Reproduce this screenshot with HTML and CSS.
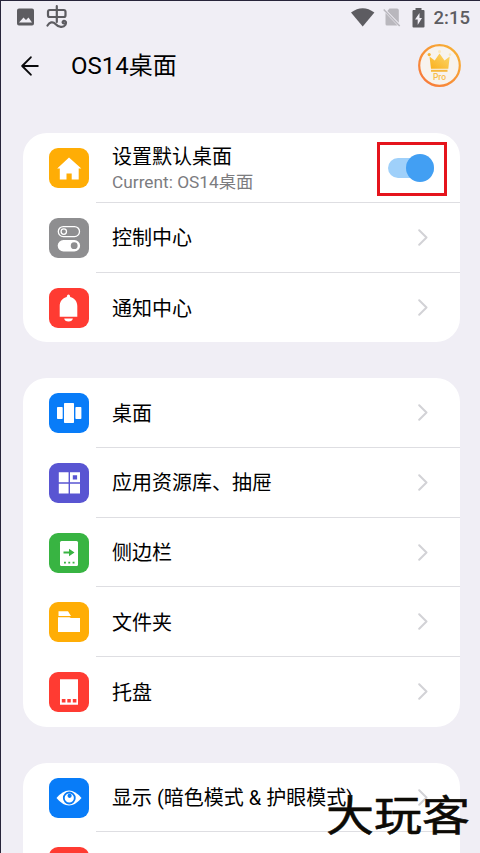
FILE: index.html
```
<!DOCTYPE html>
<html lang="zh-CN">
<head>
<meta charset="utf-8">
<title>OS14桌面</title>
<link rel="stylesheet" href="styles.css">
</head>
<body>
<div class="screen">
  <div class="statusbar">
    <svg class="st-photo" width="18" height="18" viewBox="0 0 18 18"><path fill="#5d5c61" fill-rule="evenodd" d="M2 .5h13a2 2 0 0 1 2 2v13a2 2 0 0 1-2 2H2a2 2 0 0 1-2-2v-13a2 2 0 0 1 2-2zM2 14.500h13l-3.500-5-2.500 2.500-2.500-2.500z"/></svg>
    <svg class="st-bug" width="22" height="24" viewBox="0 0 22 24" fill="none" stroke="#5d5c61" stroke-width="2.200" stroke-linecap="round" stroke-linejoin="round"><rect x="2" y="5" width="17.500" height="7" rx="1.800"/><path d="M10.800 1.200v15.800M1.500 20.500c2-3.200 5.200-4.500 8-1.500 3 3.500 8 3.800 9.800 1 1.500-2.600.2-4.500-1.500-4.200-1.700.5-1.500 2.800.3 2.500"/></svg>
    <span class="spacer"></span>
    <svg class="st-wifi" width="24" height="19" viewBox="0 0 24 19"><path fill="#5d5c61" d="M0 4.500Q11.700-4 23.400 4.500L11.700 18.500z"/></svg>
    <svg class="st-sim" width="18" height="19" viewBox="0 0 18 19"><path fill="#b9b7bd" d="M6.500.5H14a1.800 1.800 0 0 1 1.800 1.800v12.400L4.300 3zM2.500 5l12 12.500H4A1.500 1.500 0 0 1 2.500 16z"/><path d="M.7 1.600 16.700 18" stroke="#b9b7bd" stroke-width="1.500"/></svg>
    <svg class="st-bat" width="13" height="20" viewBox="0 0 13 20"><path fill="#5d5c61" fill-rule="evenodd" d="M3.500 0h6v2H11.500a1 1 0 0 1 1 1v15.500a1 1 0 0 1-1 1h-10a1 1 0 0 1-1-1V3a1 1 0 0 1 1-1h2zM7.500 5 3 11.500h2.700V17L10 10H7.500z"/></svg>
    <span class="clock">2:15</span>
  </div>

  <header class="appbar">
    <svg class="back" width="18" height="20" viewBox="0 0 18 20" fill="none" stroke="#0b0b0d" stroke-width="1.900" stroke-linecap="round" stroke-linejoin="round"><path d="M16.800 10H1.500M9.800 1.300 1.200 10l8.600 8.700"/></svg>
    <h1>OS14桌面</h1>
    <span class="spacer"></span>
    <div class="pro">
      <svg width="43" height="43" viewBox="0 0 43 43">
        <defs>
          <linearGradient id="ring" x1="0" y1="1" x2="1" y2="0"><stop offset="0" stop-color="#f8743b"/><stop offset="1" stop-color="#f7b533"/></linearGradient>
          <linearGradient id="gold" x1="0" y1="1" x2="1" y2="0"><stop offset="0" stop-color="#faaf1c"/><stop offset="1" stop-color="#fbd970"/></linearGradient>
        </defs>
        <circle cx="21.500" cy="21.500" r="20.300" fill="#f7f3ee" stroke="url(#ring)" stroke-width="2.200"/>
        <path fill="url(#gold)" d="M11.500 12.500l5.200 4 4.800-7 5 7 5.200-4-1.400 12.200H13z"/>
        <circle cx="11.200" cy="10.600" r="1.600" fill="#f9b330"/><circle cx="21.500" cy="7.500" r="1.500" fill="#fbe9bc"/><circle cx="32" cy="10.600" r="1.300" fill="#fbe9bc"/>
        <path fill="#f6b73e" d="M13 25.800h16.500v2H13z"/>
      </svg>
      <span class="pro-label">Pro</span>
    </div>
  </header>

  <main class="groups">
    <section class="card">
      <div class="row">
        <span class="tile amber"><svg width="40" height="40" viewBox="0 0 40 40"><path fill="#fff" d="M20 9.500 32.300 20.500H29.700V31.500H22.700V25.500H17.500V31.500H10.800V20.500H8.200z"/></svg></span>
        <div class="body"><div class="text"><div class="title">设置默认桌面</div><div class="sub">Current: OS14桌面</div></div>
          <span class="highlight"><span class="switch"><span class="thumb"></span></span></span></div>
      </div>
      <div class="row">
        <span class="tile gray"><svg width="40" height="40" viewBox="0 0 40 40"><rect x="9.300" y="8.600" width="21.200" height="10" rx="5" fill="none" stroke="#fff" stroke-width="1.300"/><circle cx="14.800" cy="13.600" r="2.700" fill="none" stroke="#fff" stroke-width="1.300"/><rect x="8.700" y="22" width="22.400" height="11.500" rx="5.750" fill="#fff"/><circle cx="25.200" cy="27.700" r="3.400" fill="#8e8e90"/></svg></span>
        <div class="body"><div class="title">控制中心</div><svg class="chev" width="10" height="17" viewBox="0 0 10 17"><path d="M1.200 1.200 8.500 8.500 1.200 15.800"/></svg></div>
      </div>
      <div class="row">
        <span class="tile red"><svg width="40" height="40" viewBox="0 0 40 40"><path fill="#fff" d="M19.500 6.500c1 0 1.700 1 1.700 2.400 4.500 1 7.100 4.600 7.100 9V28.700H10.700V17.900c0-4.400 2.600-8 7.100-9 0-1.400.7-2.400 1.700-2.400zM15.200 30.500h8.700c-.4 2-1.800 3-4.400 3s-4-1-4.300-3z"/></svg></span>
        <div class="body"><div class="title">通知中心</div><svg class="chev" width="10" height="17" viewBox="0 0 10 17"><path d="M1.200 1.200 8.500 8.500 1.200 15.800"/></svg></div>
      </div>
    </section>

    <section class="card">
      <div class="row">
        <span class="tile blue"><svg width="40" height="40" viewBox="0 0 40 40" fill="#fff"><rect x="8" y="14" width="5.700" height="12" rx=".8"/><rect x="15" y="10" width="10" height="20" rx=".8"/><rect x="26.400" y="14" width="6" height="12" rx=".8"/></svg></span>
        <div class="body"><div class="title">桌面</div><svg class="chev" width="10" height="17" viewBox="0 0 10 17"><path d="M1.200 1.200 8.500 8.500 1.200 15.800"/></svg></div>
      </div>
      <div class="row">
        <span class="tile purple"><svg width="40" height="40" viewBox="0 0 40 40"><path fill="#fff" fill-rule="evenodd" d="M9.800 9.300h9.800v9.900H9.800zM21 9.300h10v9.900H21zM23.800 12.200v4.200h4.300v-4.200zM9.800 20.700h9.800v9.800H9.800zM21 20.700h10v9.800H21z"/></svg></span>
        <div class="body"><div class="title">应用资源库、抽屉</div><svg class="chev" width="10" height="17" viewBox="0 0 10 17"><path d="M1.200 1.200 8.500 8.500 1.200 15.800"/></svg></div>
      </div>
      <div class="row">
        <span class="tile green"><svg width="40" height="40" viewBox="0 0 40 40"><rect x="11" y="8" width="18" height="25" rx="1.500" fill="#fff"/><path fill="#38b442" d="M14.500 18.500h5.500V15.700l5.500 3.700-5.500 3.800v-2.800h-5.500zM15 28.700h1.900v1.900H15zM19.300 28.700h1.900v1.900h-1.900zM23.600 28.700h1.900v1.900h-1.900z"/></svg></span>
        <div class="body"><div class="title">侧边栏</div><svg class="chev" width="10" height="17" viewBox="0 0 10 17"><path d="M1.200 1.200 8.500 8.500 1.200 15.800"/></svg></div>
      </div>
      <div class="row">
        <span class="tile amber"><svg width="40" height="40" viewBox="0 0 40 40"><path fill="#fff" d="M9.500 9.300H19l3 4.600H9.500zM9 15.300H20.500l1.500.8h9V30H9z"/></svg></span>
        <div class="body"><div class="title">文件夹</div><svg class="chev" width="10" height="17" viewBox="0 0 10 17"><path d="M1.200 1.200 8.500 8.500 1.200 15.800"/></svg></div>
      </div>
      <div class="row">
        <span class="tile red"><svg width="40" height="40" viewBox="0 0 40 40"><path fill="#fff" d="M11 7.300h18v25.500H11z"/><path fill="#ff3b32" d="M12.800 27h3.700v3.500h-3.700zM18.300 27h3.500v3.500h-3.500zM23.800 27h3.600v3.500h-3.600z"/></svg></span>
        <div class="body"><div class="title">托盘</div><svg class="chev" width="10" height="17" viewBox="0 0 10 17"><path d="M1.200 1.200 8.500 8.500 1.200 15.800"/></svg></div>
      </div>
    </section>

    <section class="card">
      <div class="row">
        <span class="tile blue"><svg width="40" height="40" viewBox="0 0 40 40"><path fill="#fff" d="M7.500 20Q20 5 32.500 20 20 35 7.500 20z"/><circle cx="20.300" cy="20" r="5.500" fill="#fff" stroke="#087cf8" stroke-width="1.800"/><circle cx="20.600" cy="17.800" r="2.100" fill="#087cf8"/></svg></span>
        <div class="body"><div class="title">显示 (暗色模式 &amp; 护眼模式)</div><svg class="chev" width="10" height="17" viewBox="0 0 10 17"><path d="M1.200 1.200 8.500 8.500 1.200 15.800"/></svg></div>
      </div>
      <div class="row">
        <span class="tile red"></span>
        <div class="body"></div>
      </div>
    </section>
  </main>
  <div class="watermark">大玩客</div>
</div>
</body>
</html>
```
FILE: styles.css
```
* { box-sizing: border-box; }
html, body { margin: 0; height: 853px; overflow: hidden; }
body { font-family: Roboto, "Noto Sans CJK SC", sans-serif; color: #000; }
.screen {
  position: relative;
  width: 480px;
  height: 853px;
  overflow: hidden;
  background: #f0eef5;
  border-top: 1px solid #27243a;
  border-left: 1px solid #27243a;
}
.spacer { flex: 1; }
.statusbar { display: flex; align-items: center; height: 33px; padding: 0 10px 0 16px; }
.st-photo { margin-top: -1px; }
.st-bug { margin: -1px 0 0 11px; }
.st-wifi { margin-right: 8px; }
.st-sim { margin-right: 11px; }
.st-bat { margin-right: 9px; }
.clock { font-size: 18.500px; line-height: 20px; font-weight: 500; color: #5d5c61; }
.appbar { display: flex; align-items: center; height: 63px; padding: 0 19px 0 20px; }
.appbar h1 { margin: 0 0 0 32px; font-size: 24px; line-height: 32px; font-weight: 400; }
.pro { position: relative; width: 43px; height: 43px; }
.pro svg { display: block; }
.pro-label { position: absolute; left: 0; right: 0; top: 28px; text-align: center; font-size: 8.500px; line-height: 10px; color: #f7bd4c; font-weight: 500; }
.groups { display: flex; flex-direction: column; gap: 36px; padding: 36.300px 20px 0 22px; }
.card { flex: none; background: #fff; border-radius: 24px; overflow: hidden; }
.row { display: flex; align-items: center; height: 69.700px; padding-left: 26px; }
.tile { flex: none; width: 40px; height: 40px; border-radius: 9px; }
.tile svg { display: block; }
.amber { background: #ffad05; }
.gray { background: #8e8e90; }
.red { background: #ff3b32; }
.blue { background: #087cf8; }
.purple { background: #5955d2; }
.green { background: #38b442; }
.body { flex: 1; align-self: stretch; display: flex; align-items: center; justify-content: space-between; margin-left: 7px; padding: 0 32px 0 16px; border-bottom: 1px solid #dedee2; }
.row:last-child .body { border-bottom: 0; }
.title { padding-top: 2px; font-size: 20px; line-height: 28px; white-space: nowrap; }
.text { padding-top: 3px; }
.text .title { padding-top: 0; line-height: 26px; }
.sub { font-size: 17.300px; line-height: 24px; color: #7c7c7f; white-space: nowrap; }
.chev { flex: none; fill: none; stroke: #d2d2d6; stroke-width: 2; stroke-linecap: round; stroke-linejoin: round; }
.highlight { display: flex; align-items: center; justify-content: center; width: 70px; height: 54px; margin: 2px -19px 0 0; border: 3px solid #e5141c; }
.switch { display: flex; align-items: center; justify-content: flex-end; width: 46px; height: 20px; margin: -2px 2px 0 0; border-radius: 10px; background: #9fd0fa; }
.thumb { flex: none; width: 28px; height: 28px; border-radius: 50%; background: #429ff3; }
.watermark { position: absolute; left: 325px; top: 788px; font-size: 48px; line-height: 56px; font-weight: 400; color: #0d0b06; -webkit-text-stroke: .6px #0d0b06; white-space: nowrap; transform: scaleY(.88); text-shadow: 0 0 1px #d9d2c4; }
```
